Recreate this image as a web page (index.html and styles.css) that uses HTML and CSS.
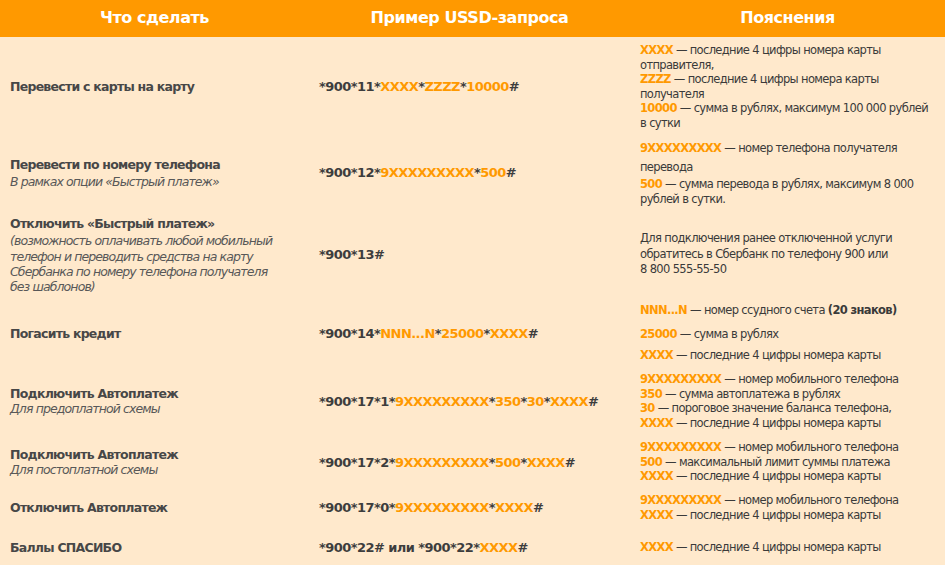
FILE: index.html
```html
<!DOCTYPE html>
<html lang="ru">
<head>
<meta charset="utf-8">
<title>USSD-запросы</title>
<link rel="stylesheet" href="styles.css">
</head>
<body>
<table class="ussd">
  <colgroup>
    <col class="c-what">
    <col class="c-code">
    <col class="c-note">
  </colgroup>
  <thead>
    <tr class="head">
      <th>Что сделать</th>
      <th>Пример USSD-запроса</th>
      <th>Пояснения</th>
    </tr>
  </thead>
  <tbody>
    <tr class="r1">
      <td class="what"><b>Перевести с карты на карту</b></td>
      <td class="code">*900*11*<em>XXXX</em>*<em>ZZZZ</em>*<em>10000</em>#</td>
      <td class="note"><p><em>XXXX</em> — последние 4 цифры номера карты<br>отправителя,<br><em>ZZZZ</em> — последние 4 цифры номера карты<br>получателя<br><em>10000</em> — сумма в рублях, максимум 100 000 рублей<br>в сутки</p></td>
    </tr>
    <tr class="r2">
      <td class="what"><b class="tall">Перевести по номеру телефона</b><i class="tall">В рамках опции «Быстрый платеж»</i></td>
      <td class="code">*900*12*<em>9XXXXXXXXX</em>*<em>500</em>#</td>
      <td class="note"><p class="loose"><em>9XXXXXXXXX</em> — номер телефона получателя<br>перевода</p><p><em>500</em> — сумма перевода в рублях, максимум 8 000<br>рублей в сутки.</p></td>
    </tr>
    <tr class="r3">
      <td class="what"><b class="tall">Отключить «Быстрый платеж»</b><i>(возможность оплачивать любой мобильный<br>телефон и переводить средства на карту<br>Сбербанка по номеру телефона получателя<br>без шаблонов)</i></td>
      <td class="code">*900*13#</td>
      <td class="note"><p class="mid">Для подключения ранее отключенной услуги<br>обратитесь в Сбербанк по телефону 900 или<br>8 800 555-55-50</p></td>
    </tr>
    <tr class="r4">
      <td class="what"><b>Погасить кредит</b></td>
      <td class="code">*900*14*<em>NNN...N</em>*<em>25000</em>*<em>XXXX</em>#</td>
      <td class="note"><p class="gap gap-wide"><em>NNN...N</em> — номер ссудного счета <strong>(20 знаков)</strong></p><p class="gap"><em>25000</em> — сумма в рублях</p><p><em>XXXX</em> — последние 4 цифры номера карты</p></td>
    </tr>
    <tr class="r5">
      <td class="what"><b>Подключить Автоплатеж</b><i>Для предоплатной схемы</i></td>
      <td class="code">*900*17*1*<em>9XXXXXXXXX</em>*<em>350</em>*<em>30</em>*<em>XXXX</em>#</td>
      <td class="note"><p><em>9XXXXXXXXX</em> — номер мобильного телефона<br><em>350</em> — сумма автоплатежа в рублях<br><em>30</em> — пороговое значение баланса телефона,<br><em>XXXX</em> — последние 4 цифры номера карты</p></td>
    </tr>
    <tr class="r6">
      <td class="what"><b>Подключить Автоплатеж</b><i>Для постоплатной схемы</i></td>
      <td class="code">*900*17*2*<em>9XXXXXXXXX</em>*<em>500</em>*<em>XXXX</em>#</td>
      <td class="note"><p><em>9XXXXXXXXX</em> — номер мобильного телефона<br><em>500</em> — максимальный лимит суммы платежа<br><em>XXXX</em> — последние 4 цифры номера карты</p></td>
    </tr>
    <tr class="r7">
      <td class="what"><b>Отключить Автоплатеж</b></td>
      <td class="code">*900*17*0*<em>9XXXXXXXXX</em>*<em>XXXX</em>#</td>
      <td class="note"><p><em>9XXXXXXXXX</em> — номер мобильного телефона<br><em>XXXX</em> — последние 4 цифры номера карты</p></td>
    </tr>
    <tr class="r8">
      <td class="what"><b>Баллы СПАСИБО</b></td>
      <td class="code">*900*22# или *900*22*<em>XXXX</em>#</td>
      <td class="note"><p><em>XXXX</em> — последние 4 цифры номера карты</p></td>
    </tr>
  </tbody>
</table>
</body>
</html>
```
FILE: styles.css
```css
html, body {
  margin: 0;
  padding: 0;
  background: #ffe9cc;
}
body {
  font-family: "DejaVu Sans", Verdana, sans-serif;
  color: #3a3a3a;
  width: 945px;
  height: 565px;
  overflow: hidden;
}
.ussd {
  border-collapse: collapse;
  border-spacing: 0;
  table-layout: fixed;
  width: 945px;
}
.c-what { width: 309px; }
.c-code { width: 321px; }
.c-note { width: 315px; }

.head {
  height: 37px;
  background: #ff9900;
}
.head th {
  color: #ffffff;
  font-size: 16px;
  font-weight: bold;
  letter-spacing: -0.45px;
  text-align: center;
  vertical-align: middle;
  padding: 0 0 2px;
}

td {
  padding: 0 0 0 10px;
  vertical-align: middle;
  white-space: nowrap;
}

.what b {
  display: block;
  font-size: 12.5px;
  line-height: 15px;
  color: #474747;
  letter-spacing: -0.75px;
}
.what b.tall { line-height: 19px; }
.what i {
  display: block;
  font-size: 12.5px;
  line-height: 15.3px;
  color: #585858;
  letter-spacing: -0.9px;
}

.code {
  font-size: 13px;
  font-weight: bold;
  color: #3d3d3d;
  letter-spacing: -0.55px;
}
.code em, .note em {
  font-style: normal;
  font-weight: bold;
  color: #ff9900;
}

.note p {
  margin: 0;
  font-size: 11.5px;
  line-height: 14.5px;
  letter-spacing: -0.65px;
  color: #3a3a3a;
}
.note p.loose { line-height: 19px; }
.note p.mid { line-height: 15.5px; }
.note p.gap { margin-bottom: 7px; }
.note p.gap-wide { margin-bottom: 9px; }
.note strong { font-weight: bold; }

.r1 { height: 99px; }
.r2 { height: 73px; }
.r3 { height: 91px; }
.r4 { height: 66px; }
.r5 { height: 70px; }
.r6 { height: 52px; }
.r7 { height: 39px; }
.r8 { height: 40px; }
```
